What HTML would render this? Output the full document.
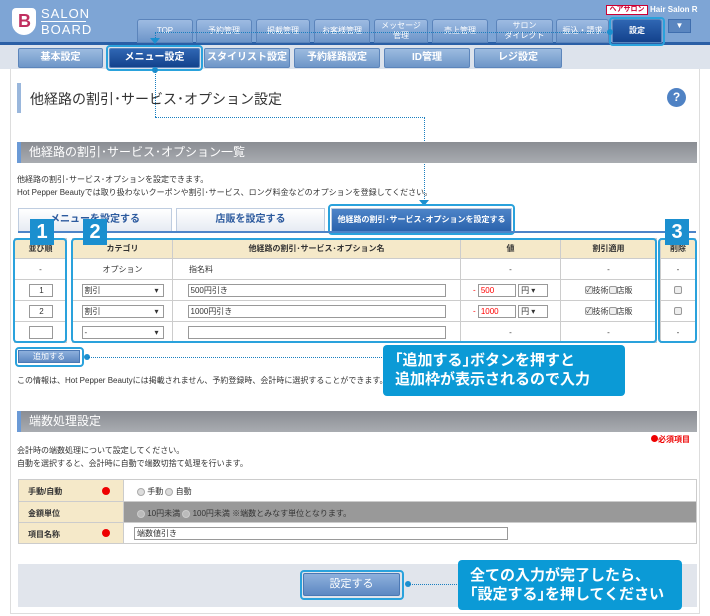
<!DOCTYPE html>
<html><head><meta charset="utf-8"><style>
*{margin:0;padding:0;box-sizing:border-box}
body{width:710px;height:616px;position:relative;background:#fff;font-family:"Liberation Sans","Noto Sans CJK JP",sans-serif;overflow:hidden;color:#333}
.a{position:absolute}
.nt{position:absolute;top:19px;height:24px;background:linear-gradient(#9dbbe2,#6d95c9);border:1px solid #5b84bb;border-radius:3px 3px 0 0;color:#fff;font-size:8px;text-align:center;line-height:22px}
.st{position:absolute;top:48px;height:20px;background:linear-gradient(#9cbbe0,#6e96c8);border:1px solid #5c85bb;border-radius:2px;color:#fff;font-size:10px;font-weight:bold;text-align:center;line-height:18px;white-space:nowrap;overflow:hidden}
.dk{background:linear-gradient(#2f66b3,#13428c)!important}
.sec{position:absolute;left:17px;width:680px;height:21px;background:linear-gradient(#8a8d93,#a9acb1);border-left:4px solid #6b9ad6;color:#fff;font-size:12px;line-height:21px;padding-left:8px}
.sm{position:absolute;font-size:8px;color:#333;white-space:nowrap}
.tab{position:absolute;top:208px;height:23px;background:linear-gradient(#fff,#e6ebf3);border:1px solid #bfcde0;border-bottom:none;color:#2c5a9e;font-size:10px;font-weight:bold;text-align:center;line-height:22px}
table{border-collapse:collapse;position:absolute}
td{border:1px solid #ccc;font-size:8px;text-align:center;height:21px}
.h td{background:#f5e9c9;height:20px;font-weight:bold}
.in{display:inline-block;border:1px solid #999;height:13px;background:#fff;vertical-align:middle;font-size:8px;text-align:left;line-height:11px;padding-left:2px}
.bd{position:absolute;width:24px;height:26px;background:#1b8fcf;color:#fff;font-size:20px;font-weight:bold;text-align:center;line-height:26px}
.ol{position:absolute;border:2px solid #2aa2dc;border-radius:4px}
.co{position:absolute;background:#0b9ad6;border-radius:4px;color:#fff;font-weight:bold;font-size:15px;line-height:19px;padding:6px 12px}
.dv{position:absolute;border-left:1px dotted #1a7fc0}
.dh{position:absolute;border-top:1px dotted #1a7fc0}
.dot{position:absolute;width:6px;height:6px;border-radius:3px;background:#1b8fcf}
.arr{position:absolute;width:0;height:0;border-left:5px solid transparent;border-right:5px solid transparent;border-top:6px solid #1b8fcf}
.ck{display:inline-block;width:8px;height:8px;border:1px solid #999;border-radius:2px;background:#eee;vertical-align:middle;font-size:7px;line-height:7px}
.rd{display:inline-block;width:8px;height:8px;border:1px solid #aaa;border-radius:4px;background:#ddd;vertical-align:middle}
.red{display:inline-block;width:8px;height:8px;border-radius:4px;background:#e00}
</style></head><body>
<div class="a" style="left:0;top:0;width:710px;height:42px;background:#7ea5d5"></div>
<div class="a" style="left:0;top:42px;width:710px;height:3px;background:#2a5fa6"></div>
<div class="a" style="left:0;top:45px;width:710px;height:24px;background:#dde3ec"></div>
<div class="a" style="left:12px;top:8px;width:24px;height:27px;background:#fff;border-radius:4px 4px 12px 12px"></div>
<div class="a" style="left:18px;top:11px;font-size:18px;font-weight:bold;color:#c03060;line-height:20px">B</div>
<div class="a" style="left:41px;top:7px;color:#fff;font-size:13px;letter-spacing:1px;line-height:13px">SALON</div>
<div class="a" style="left:41px;top:21px;width:45px;border-top:1px solid #fff"></div>
<div class="a" style="left:41px;top:23px;color:#fff;font-size:13px;letter-spacing:1px;line-height:13px">BOARD</div>
<div class="a" style="left:606px;top:5px;width:42px;height:10px;background:#fff;border:1px solid #c03;color:#c03;font-size:7px;line-height:8px;text-align:center;font-weight:bold">ヘアサロン</div>
<div class="a" style="left:650px;top:5px;color:#fff;font-size:8px;font-weight:bold">Hair Salon R</div>
<div class="nt" style="left:137px;width:56px">TOP</div>
<div class="nt" style="left:196px;width:56px">予約管理</div>
<div class="nt" style="left:256px;width:54px">掲載管理</div>
<div class="nt" style="left:314px;width:56px">お客様管理</div>
<div class="nt" style="left:374px;width:54px;line-height:10px;padding-top:1px">メッセージ<br>管理</div>
<div class="nt" style="left:432px;width:56px">売上管理</div>
<div class="nt" style="left:496px;width:57px;line-height:10px;padding-top:1px">サロン<br>ダイレクト</div>
<div class="nt" style="left:556px;width:53px">振込・請求</div>
<div class="nt dk" style="left:612px;width:50px;font-weight:bold">設定</div>
<div class="ol" style="left:609px;top:17px;width:56px;height:29px"></div>
<div class="a" style="left:668px;top:19px;width:23px;height:14px;background:#5a86c0;border:1px solid #3f6eae;color:#fff;font-size:8px;text-align:center;line-height:12px">▼</div>
<div class="st" style="left:18px;width:85px">基本設定</div>
<div class="st dk" style="left:109px;width:91px">メニュー設定</div>
<div class="ol" style="left:106px;top:45px;width:97px;height:26px"></div>
<div class="st" style="left:204px;width:86px">スタイリスト設定</div>
<div class="st" style="left:294px;width:86px">予約経路設定</div>
<div class="st" style="left:384px;width:86px">ID管理</div>
<div class="st" style="left:474px;width:88px">レジ設定</div>
<div class="dh" style="left:155px;top:32px;width:455px"></div>
<div class="dv" style="left:155px;top:32px;height:8px"></div>
<div class="dot" style="left:607px;top:29px"></div>
<div class="arr" style="left:150px;top:38px"></div>
<div class="a" style="left:10px;top:69px;width:690px;height:545px;border:1px solid #ddd;border-top:none"></div>
<div class="a" style="left:17px;top:83px;width:4px;height:30px;background:#9ab7dc"></div>
<div class="a" style="left:30px;top:89px;font-size:14px;color:#333">他経路の割引･サービス･オプション設定</div>
<div class="a" style="left:667px;top:88px;width:19px;height:19px;border-radius:10px;background:#4f82c4;color:#fff;font-size:12px;font-weight:bold;text-align:center;line-height:19px">?</div>
<div class="dot" style="left:152px;top:67px"></div>
<div class="dv" style="left:155px;top:70px;height:47px"></div>
<div class="dh" style="left:155px;top:117px;width:270px"></div>
<div class="dv" style="left:424px;top:117px;height:84px"></div>
<div class="arr" style="left:419px;top:200px"></div>
<div class="sec" style="top:142px">他経路の割引･サービス･オプション一覧</div>
<div class="sm" style="left:17px;top:174px">他経路の割引･サービス･オプションを設定できます。</div>
<div class="sm" style="left:17px;top:187px">Hot Pepper Beautyでは取り扱わないクーポンや割引･サービス、ロング料金などのオプションを登録してください。</div>
<div class="tab" style="left:18px;width:154px">メニューを設定する</div>
<div class="tab" style="left:176px;width:149px">店販を設定する</div>
<div class="tab" style="left:331px;width:181px;background:linear-gradient(#4d84c8,#2a63ad);color:#fff;font-size:8px">他経路の割引･サービス･オプションを設定する</div>
<div class="ol" style="left:328px;top:204px;width:187px;height:31px"></div>
<div class="a" style="left:18px;top:231px;width:678px;height:2px;background:#4d84c8"></div>
<table style="left:14px;top:238px;width:682px">
<tr class="h"><td style="width:52px">並び順</td><td style="width:6px;border:none;background:#fff"></td><td style="width:100px">カテゴリ</td><td style="width:288px">他経路の割引･サービス･オプション名</td><td style="width:100px">値</td><td style="width:96px">割引適用</td><td style="width:4px;border:none;background:#fff"></td><td>削除</td></tr>
<tr><td>-</td><td style="border:none"></td><td>オプション</td><td style="text-align:left;padding-left:16px">指名料</td><td>-</td><td>-</td><td style="border:none"></td><td>-</td></tr>
<tr><td><span class="in" style="width:24px;text-align:center">1</span></td><td style="border:none"></td><td><span class="in" style="width:82px">割引<span style="float:right;margin-right:4px">▾</span></span></td><td><span class="in" style="width:258px">500円引き</span></td><td><span style="color:red">- </span><span class="in" style="width:38px;color:red">500</span> <span class="in" style="width:30px">円 ▾</span></td><td><span class="ck">✓</span>技術<span class="ck"></span>店販</td><td style="border:none"></td><td><span class="ck"></span></td></tr>
<tr><td><span class="in" style="width:24px;text-align:center">2</span></td><td style="border:none"></td><td><span class="in" style="width:82px">割引<span style="float:right;margin-right:4px">▾</span></span></td><td><span class="in" style="width:258px">1000円引き</span></td><td><span style="color:red">- </span><span class="in" style="width:38px;color:red">1000</span> <span class="in" style="width:30px">円 ▾</span></td><td><span class="ck">✓</span>技術<span class="ck"></span>店販</td><td style="border:none"></td><td><span class="ck"></span></td></tr>
<tr><td><span class="in" style="width:24px"></span></td><td style="border:none"></td><td><span class="in" style="width:82px">-<span style="float:right;margin-right:4px">▾</span></span></td><td><span class="in" style="width:258px"></span></td><td>-</td><td>-</td><td style="border:none"></td><td>-</td></tr>
</table>
<div class="ol" style="left:13px;top:238px;width:54px;height:105px"></div>
<div class="ol" style="left:71px;top:238px;width:586px;height:105px"></div>
<div class="ol" style="left:658px;top:238px;width:39px;height:105px"></div>
<div class="bd" style="left:30px;top:219px">1</div>
<div class="bd" style="left:83px;top:219px">2</div>
<div class="bd" style="left:665px;top:219px">3</div>
<div class="a" style="left:18px;top:350px;width:62px;height:13px;background:linear-gradient(#8eb0dc,#5d88c2);border:1px solid #4b78b4;color:#fff;font-size:8px;text-align:center;line-height:11px">追加する</div>
<div class="ol" style="left:15px;top:347px;width:69px;height:20px"></div>
<div class="dot" style="left:84px;top:354px"></div>
<div class="dh" style="left:88px;top:357px;width:296px"></div>
<div class="co" style="left:383px;top:345px;width:242px;height:51px">｢追加する｣ボタンを押すと<br>追加枠が表示されるので入力</div>
<div class="sm" style="left:17px;top:375px">この情報は、Hot Pepper Beautyには掲載されません、予約登録時、会計時に選択することができます。</div>
<div class="sec" style="top:411px">端数処理設定</div>
<div class="a" style="left:651px;top:434px;font-size:8px;color:#e00;font-weight:bold"><span class="red" style="width:7px;height:7px"></span>必須項目</div>
<div class="sm" style="left:17px;top:445px">会計時の端数処理について設定してください。</div>
<div class="sm" style="left:17px;top:458px">自動を選択すると、会計時に自動で端数切捨て処理を行います。</div>
<div class="a" style="left:18px;top:479px;width:679px;height:65px;border:1px solid #ccc"></div>
<div class="a" style="left:19px;top:480px;width:104px;height:63px;background:#f5e9c9"></div>
<div class="a" style="left:123px;top:501px;width:573px;height:22px;background:#999"></div>
<div class="a" style="left:19px;top:501px;width:677px;border-top:1px solid #ccc"></div>
<div class="a" style="left:19px;top:522px;width:677px;border-top:1px solid #ccc"></div>
<div class="a" style="left:123px;top:480px;height:63px;border-left:1px solid #ccc"></div>
<div class="sm" style="left:28px;top:486px;font-weight:bold">手動/自動</div><span class="red a" style="left:102px;top:487px"></span>
<div class="sm" style="left:28px;top:508px;font-weight:bold">金額単位</div>
<div class="sm" style="left:28px;top:529px;font-weight:bold">項目名称</div><span class="red a" style="left:102px;top:529px"></span>
<div class="sm" style="left:137px;top:486px"><span class="rd"></span> 手動 <span class="rd"></span> 自動</div>
<div class="sm" style="left:137px;top:508px"><span class="rd" style="border-color:#ccc;background:#bbb"></span> 10円未満 <span class="rd" style="border-color:#ccc;background:#bbb"></span> 100円未満 ※端数とみなす単位となります。</div>
<span class="in a" style="left:134px;top:527px;width:374px;height:13px">端数値引き</span>
<div class="a" style="left:18px;top:564px;width:679px;height:43px;background:#e1e5ec"></div>
<div class="a" style="left:303px;top:573px;width:97px;height:23px;background:linear-gradient(#8eb0dc,#5d88c2);border:1px solid #4b78b4;border-radius:2px;color:#fff;font-size:11px;text-align:center;line-height:21px">設定する</div>
<div class="ol" style="left:300px;top:570px;width:104px;height:30px"></div>
<div class="dot" style="left:405px;top:581px"></div>
<div class="dh" style="left:409px;top:584px;width:50px"></div>
<div class="co" style="left:458px;top:560px;width:224px;height:50px;padding-top:6px">全ての入力が完了したら、<br>｢設定する｣を押してください</div>
</body></html>
